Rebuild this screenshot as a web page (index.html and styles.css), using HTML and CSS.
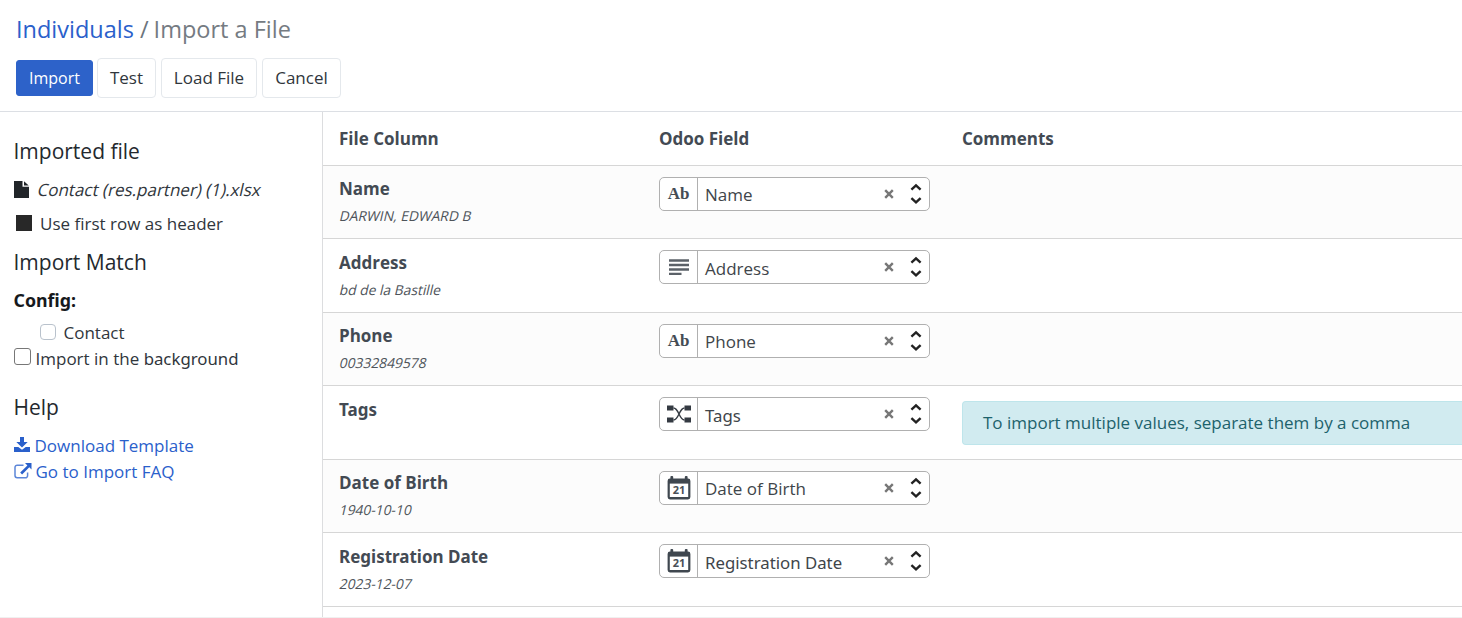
FILE: index.html
```html
<!DOCTYPE html>
<html lang="en">
<head>
<meta charset="utf-8">
<title>Import a File</title>
<link rel="stylesheet" href="styles.css">
</head>
<body>
<svg class="defs">
  <symbol id="i-clear" viewBox="0 0 10 10"><path d="M1.2 1.2 8.8 8.8M8.8 1.2 1.2 8.8" fill="none" stroke="#777" stroke-width="2.4"/></symbol>
  <symbol id="i-sort" viewBox="0 0 12 22"><path d="M1.4 6.6 6 2.3l4.6 4.3M1.4 15.1 6 19.4l4.6-4.3" fill="none" stroke="#222" stroke-width="2.4"/></symbol>
  <symbol id="i-cal" viewBox="0 0 24 24"><path d="M3 2.500h18a2.400 2.400 0 0 1 2.400 2.400V21A2.400 2.400 0 0 1 21 23.400H3A2.400 2.400 0 0 1 .6 21V4.900A2.400 2.400 0 0 1 3 2.500z" fill="#3f474f"/><rect x="3.400" y="0" width="2.800" height="4" rx="1" fill="#3f474f"/><rect x="17.800" y="0" width="2.800" height="4" rx="1" fill="#3f474f"/><path d="M2.800 7.600h18.400v13.400H2.800z" fill="#fff"/><text x="12" y="18.200" text-anchor="middle" class="cal-text">21</text></symbol>
</svg>
<header class="top">
  <div class="crumbs"><a class="link">Individuals</a><span class="slash">/</span><span class="current">Import a File</span></div>
  <div class="buttons">
    <button class="btn primary">Import</button><button class="btn test">Test</button><button class="btn load">Load File</button><button class="btn cancel">Cancel</button>
  </div>
</header>
<main class="main">
  <aside class="side">
    <h2 class="title t-file">Imported file</h2>
    <div class="line l-file"><svg width="15" height="17" viewBox="0 0 15 17"><path d="M0 0h8.500v5.800H15V17H0z" fill="#212529"/><path d="M10 .3 14.700 4.600H10z" fill="#212529"/></svg><em class="fname">Contact (res.partner) (1).xlsx</em></div>
    <div class="line l-first"><span class="box solid"></span><span class="first">Use first row as header</span></div>
    <h2 class="title t-match">Import Match</h2>
    <div class="line config noto">Config:</div>
    <div class="line l-contact"><span class="box soft"></span><span class="contact">Contact</span></div>
    <div class="line l-back"><span class="box plain"></span><span class="back">Import in the <span class="noto">background</span></span></div>
    <h2 class="title t-help">Help</h2>
    <a class="line link l-down"><svg class="dl" width="16" height="15" viewBox="0 0 16 15"><path d="M6 0h4v5h3.700L8 10.400 2.300 5H6zM0 10h4.300L8 12.700 11.700 10H16v5H0z" fill="#2a60cb"/></svg><span class="down">Download Template</span></a>
    <a class="line link l-faq"><svg width="18" height="16" viewBox="0 0 18 16"><path d="M9.500 2.200H3.200A2.200 2.200 0 0 0 1 4.400v8.200a2.200 2.200 0 0 0 2.200 2.200h8.200a2.200 2.200 0 0 0 2.200-2.200V9.500" fill="none" stroke="#5c86d8" stroke-width="1.500"/><path d="M11 0h6.500v6.500l-2.200-2.200-7.200 7.200-1.900-1.900 7.200-7.200z" fill="#2a60cb"/></svg><span class="faq">Go to Import FAQ</span></a>
  </aside>
  <section class="table">
    <div class="row head"><div>File Column</div><div>Odoo Field</div><div class="comments">Comments</div></div>
    <div class="row odd"><div class="col"><b>Name</b><em>DARWIN, EDWARD B</em></div><div class="select"><span class="type ab">Ab</span><span class="value">Name</span><svg class="x" width="10" height="10"><use href="#i-clear"/></svg><svg class="s" width="12" height="22"><use href="#i-sort"/></svg></div></div>
    <div class="row"><div class="col"><b>Address</b><em>bd de la Bastille</em></div><div class="select"><span class="type"><svg width="20" height="16" viewBox="0 0 20 16"><path d="M0 1.500h20M0 6h20M0 10.500h20M0 15h12.500" stroke="#5b6168" stroke-width="2.600"/></svg></span><span class="value">Address</span><svg class="x" width="10" height="10"><use href="#i-clear"/></svg><svg class="s" width="12" height="22"><use href="#i-sort"/></svg></div></div>
    <div class="row odd"><div class="col"><b>Phone</b><em>00332849578</em></div><div class="select"><span class="type ab">Ab</span><span class="value">Phone</span><svg class="x" width="10" height="10"><use href="#i-clear"/></svg><svg class="s" width="12" height="22"><use href="#i-sort"/></svg></div></div>
    <div class="row"><div class="col"><b class="noto">Tags</b></div><div class="select"><span class="type"><svg width="24" height="18" viewBox="0 0 24 18"><path d="M0 .5h6.500v5H0zM17.500.5H24v5h-6.500zM0 12.500h6.500v5H0zM17.500 12.500H24v5h-6.500z" fill="#343a42"/><path d="M6.500 3C12 3 12 15 17.500 15M6.500 15C12 15 12 3 17.500 3" fill="none" stroke="#343a42" stroke-width="1.400"/></svg></span><span class="value noto">Tags</span><svg class="x" width="10" height="10"><use href="#i-clear"/></svg><svg class="s" width="12" height="22"><use href="#i-sort"/></svg></div><div class="alert">To import multiple values, separate them by a comma</div></div>
    <div class="row odd"><div class="col"><b>Date of Birth</b><em>1940-10-10</em></div><div class="select"><span class="type"><svg width="24" height="24"><use href="#i-cal"/></svg></span><span class="value">Date of Birth</span><svg class="x" width="10" height="10"><use href="#i-clear"/></svg><svg class="s" width="12" height="22"><use href="#i-sort"/></svg></div></div>
    <div class="row"><div class="col"><b class="noto">Registration Date</b><em>2023-12-07</em></div><div class="select"><span class="type"><svg width="24" height="24"><use href="#i-cal"/></svg></span><span class="value noto">Registration Date</span><svg class="x" width="10" height="10"><use href="#i-clear"/></svg><svg class="s" width="12" height="22"><use href="#i-sort"/></svg></div></div>
  </section>
</main>
</body>
</html>
```
FILE: styles.css
```css
* { box-sizing: border-box; }
body { margin: 0; width: 1462px; height: 618px; overflow: hidden; background: #fff; color: #30363c; font-family: "Open Sans", sans-serif; font-size: 17px; white-space: nowrap; }
.noto { font-family: "Noto Sans", sans-serif; font-size: 16.8px; }
.defs { display: none; }
svg { flex: none; }
em { font-style: normal; transform: skewX(-13deg); }
.top { height: 112px; border-bottom: 1px solid #dcdfe4; padding: 9px 0 0 16px; }
.crumbs { display: flex; height: 40px; line-height: 40px; font-size: 23.5px; }
.link { color: #2a60cb; }
.slash { margin: 0 5px 0 6px; color: #6c757d; }
.current { color: #757b82; }
.buttons { display: flex; align-items: center; height: 40px; margin-top: 9px; }
.btn { height: 40px; padding: 0 0 2px; margin: 0 5px 0 0; border: 1px solid #e4e8ec; border-radius: 4px; background: #fff; color: #30363c; font: 17px "Open Sans", sans-serif; }
.btn.primary { width: 77px; height: 36px; margin-right: 4px; border-color: #2d62c9; background: #2d62c9; color: #fff; border-radius: 3px; font-size: 16px; padding-bottom: 1px; }
.test { width: 59px; }
.load { width: 96px; }
.cancel { width: 79px; }
.main { display: flex; height: 506px; border-bottom: 1px solid #f0f0f0; }
.side { width: 322px; flex: none; padding: 19px 0 0 13.500px; }
.title { margin: 0; font-weight: 400; font-size: 21px; color: #24292e; }
.t-file { height: 40px; line-height: 40px; }
.t-match { height: 46px; line-height: 46px; }
.t-help { height: 40px; line-height: 38px; margin: 17px 0 5px; }
.line { display: flex; align-items: center; height: 26px; }
.l-file { height: 36px; }
.l-first { height: 32px; }
.config { height: 32px; padding-bottom: 2px; font-size: 17.800px; font-weight: 700; color: #16191c; }
.l-contact { height: 29px; padding-top: 1px; }
.l-back { height: 25px; padding-bottom: 1px; }
.l-down { height: 25px; }
.dl { margin-bottom: 2px; }
.fname { margin-left: 9px; }
.first { margin-left: 8px; }
.contact { margin-left: 7.500px; }
.back { margin-left: 5px; }
.down { margin-left: 5px; }
.faq { margin-left: 4px; }
.box { width: 16px; height: 16px; flex: none; }
.solid { margin-left: 2.500px; background: #282828; }
.soft { margin-left: 26.500px; border: 1.500px solid #b9c2cc; border-radius: 4px; }
.plain { width: 17px; height: 17px; margin-bottom: 3px; border: 1.500px solid #777; border-radius: 3px; }
.table { flex: 1; border-left: 1.500px solid #dcdddf; padding-left: 1px; }
.row { display: grid; grid-template-columns: 320px 303px 1fr; align-items: start; height: 73.550px; margin-left: -1px; padding-left: 16px; border-bottom: 1.500px solid #d6d6d6; }
.head { height: 53.500px; line-height: 53px; font-weight: 700; color: #434a53; }
.odd { background: #fcfcfc; }
.col { display: flex; flex-direction: column; align-items: flex-start; padding-top: 10.700px; }
.col b { line-height: 26px; color: #434a53; }
.col b.noto { font-size: 17px; }
.col em { line-height: 28px; font-size: 13.800px; color: #4e545a; padding-left: 1px; }
.select { display: flex; align-items: center; width: 271px; height: 34px; margin-top: 11px; border: 1.500px solid #b0b0b0; border-radius: 5px; background: #fff; }
.type { display: flex; align-items: center; justify-content: center; width: 38px; height: 100%; border-right: 1px solid #b0b0b0; flex: none; }
.ab { font: 700 17px "Liberation Serif", serif; color: #454c55; }
.value { flex: 1; padding: 2px 0 0 7px; color: #40454a; }
.x { margin-right: 16px; }
.s { margin-right: 7px; }
.alert { height: 44px; margin-top: 15px; padding-left: 20px; line-height: 41px; border: 1px solid #bee5eb; border-right: 0; border-radius: 4px 0 0 4px; background: #d1ebf0; color: #1d626c; }
.cal-text { font: 700 11px "Noto Sans", sans-serif; fill: #4b5158; }
```
